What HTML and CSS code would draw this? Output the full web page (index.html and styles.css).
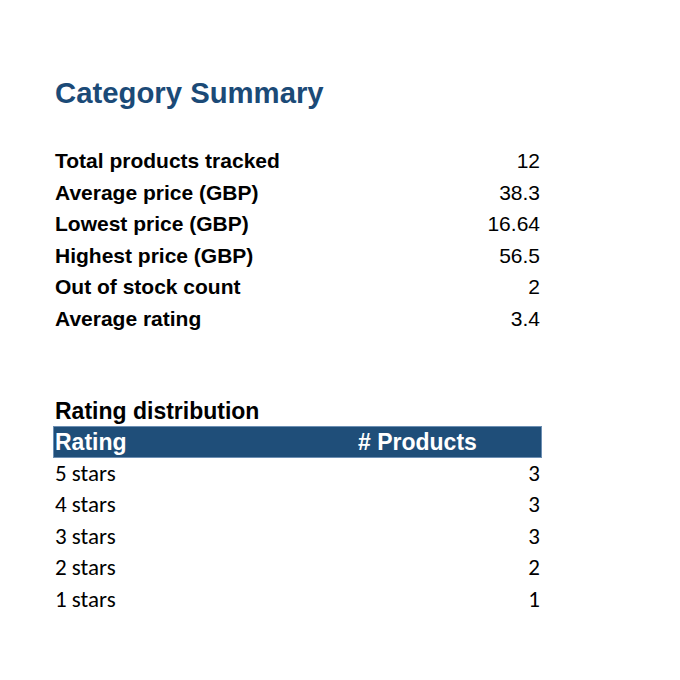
FILE: index.html
```html
<!DOCTYPE html>
<html>
<head>
<meta charset="utf-8">
<link rel="stylesheet" href="styles.css">
</head>
<body>
<div class="sheet">
  <h1 class="title">Category Summary</h1>
  <div class="summary">
    <div class="row"><span class="label">Total products tracked</span><span class="val">12</span></div>
    <div class="row"><span class="label">Average price (GBP)</span><span class="val">38.3</span></div>
    <div class="row"><span class="label">Lowest price (GBP)</span><span class="val">16.64</span></div>
    <div class="row"><span class="label">Highest price (GBP)</span><span class="val">56.5</span></div>
    <div class="row"><span class="label">Out of stock count</span><span class="val">2</span></div>
    <div class="row"><span class="label">Average rating</span><span class="val">3.4</span></div>
  </div>
  <div class="dist-title">Rating distribution</div>
  <div class="dist">
    <div class="head"><span class="h1">Rating</span><span class="h2"># Products</span></div>
    <div class="drow"><span>5 stars</span><span class="dval">3</span></div>
    <div class="drow"><span>4 stars</span><span class="dval">3</span></div>
    <div class="drow"><span>3 stars</span><span class="dval">3</span></div>
    <div class="drow"><span>2 stars</span><span class="dval">2</span></div>
    <div class="drow"><span>1 stars</span><span class="dval">1</span></div>
  </div>
</div>
</body>
</html>
```
FILE: styles.css
```css
html, body { margin: 0; padding: 0; background: #ffffff; }
.sheet {
  padding: 75px 0 0 53px;
  width: 489px;
  font-family: "Liberation Sans", Arial, sans-serif;
  color: #000;
}
.title {
  margin: 0 0 34px 2px;
  font-size: 29.3px;
  line-height: 36px;
  font-weight: bold;
  color: #1b4a77;
}
.summary { margin: 0 2px 0 2px; }
.row {
  display: flex;
  justify-content: space-between;
  height: 31.6px;
  line-height: 31.6px;
  font-size: 21px;
}
.label { font-weight: bold; }
.dist-title {
  margin: 60px 0 0 2px;
  height: 31px;
  line-height: 32px;
  font-size: 23px;
  font-weight: bold;
}
.head {
  display: flex;
  height: 30px;
  line-height: 31px;
  background: #1f4e79;
  border: 1px solid #6d8fb3;
  color: #fff;
  font-size: 23px;
  font-weight: bold;
}
.h1 { width: 300px; padding-left: 1px; }
.h2 { padding-left: 3px; }
.drow {
  display: flex;
  justify-content: space-between;
  height: 31.6px;
  line-height: 31.6px;
  padding: 0 2px;
  font-family: Carlito, Lato, sans-serif;
  font-size: 23px;
}
```
